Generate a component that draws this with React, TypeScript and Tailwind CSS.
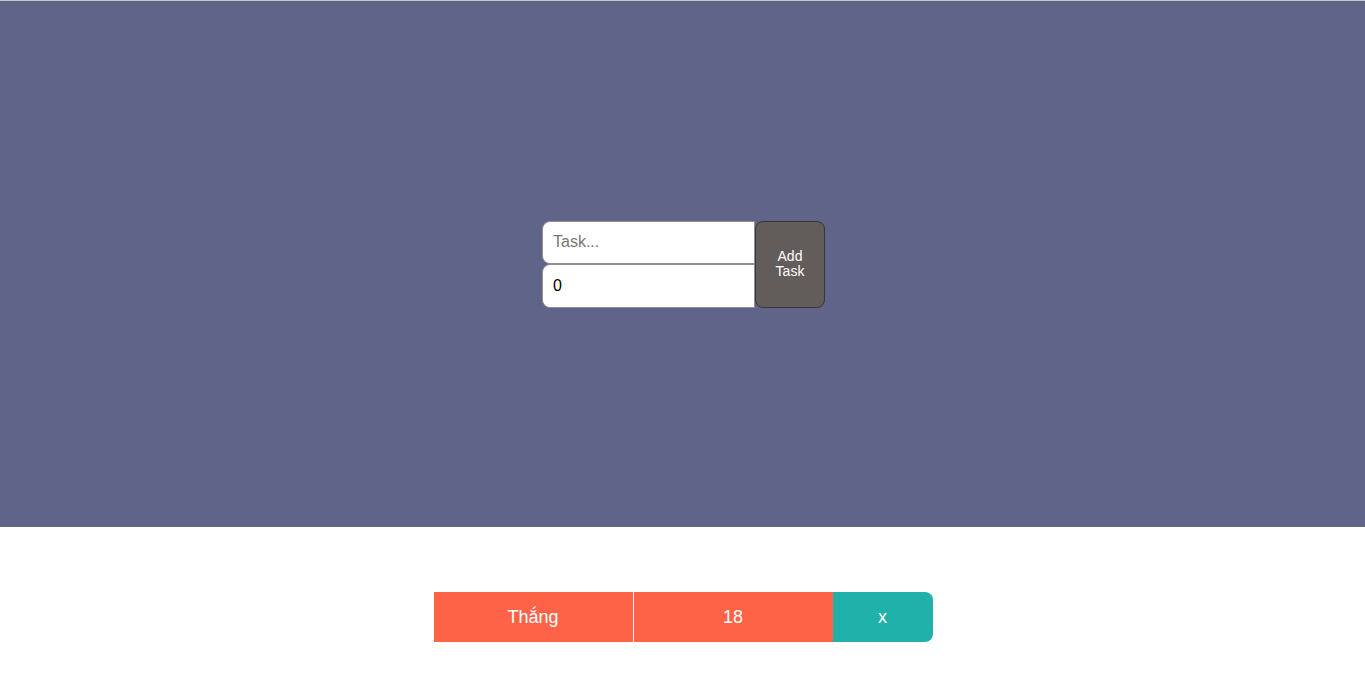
export default function App() {
  return (
    <div className="min-h-screen bg-white" style={{ fontFamily: '"Liberation Sans", Arial, sans-serif' }}>
      <div className="h-px bg-[#b9cfc3]" />
      <div className="flex h-[526px] items-center justify-center bg-[#5f6488] pl-[2px]">
        <div className="flex">
          <div className="flex w-[213px] flex-col">
            <input
              placeholder="Task..."
              className="h-[43px] w-full rounded-l-lg border border-[#8f8f8f] bg-white px-[10px] text-base text-black placeholder:text-[#757575] outline-none"
            />
            <input
              defaultValue="0"
              className="h-[44px] w-full rounded-l-lg border border-[#8f8f8f] bg-white px-[10px] text-base text-black outline-none"
            />
          </div>
          <button className="h-[87px] w-[70px] rounded-lg border border-[#3a3636] bg-[#625c5b] text-[14px] leading-[15px] text-white">
            Add
            <br />
            Task
          </button>
        </div>
      </div>
      <div className="flex justify-center pt-[65px] pl-px">
        <div className="flex h-[50px] text-white text-lg">
          <div className="flex w-[200px] items-center justify-center border-r border-white bg-[#ff6347]">Thắng</div>
          <div className="flex w-[199px] items-center justify-center bg-[#ff6347]">18</div>
          <div className="flex w-[100px] items-center justify-center rounded-r-lg bg-[#20b2aa]">x</div>
        </div>
      </div>
    </div>
  );
}
